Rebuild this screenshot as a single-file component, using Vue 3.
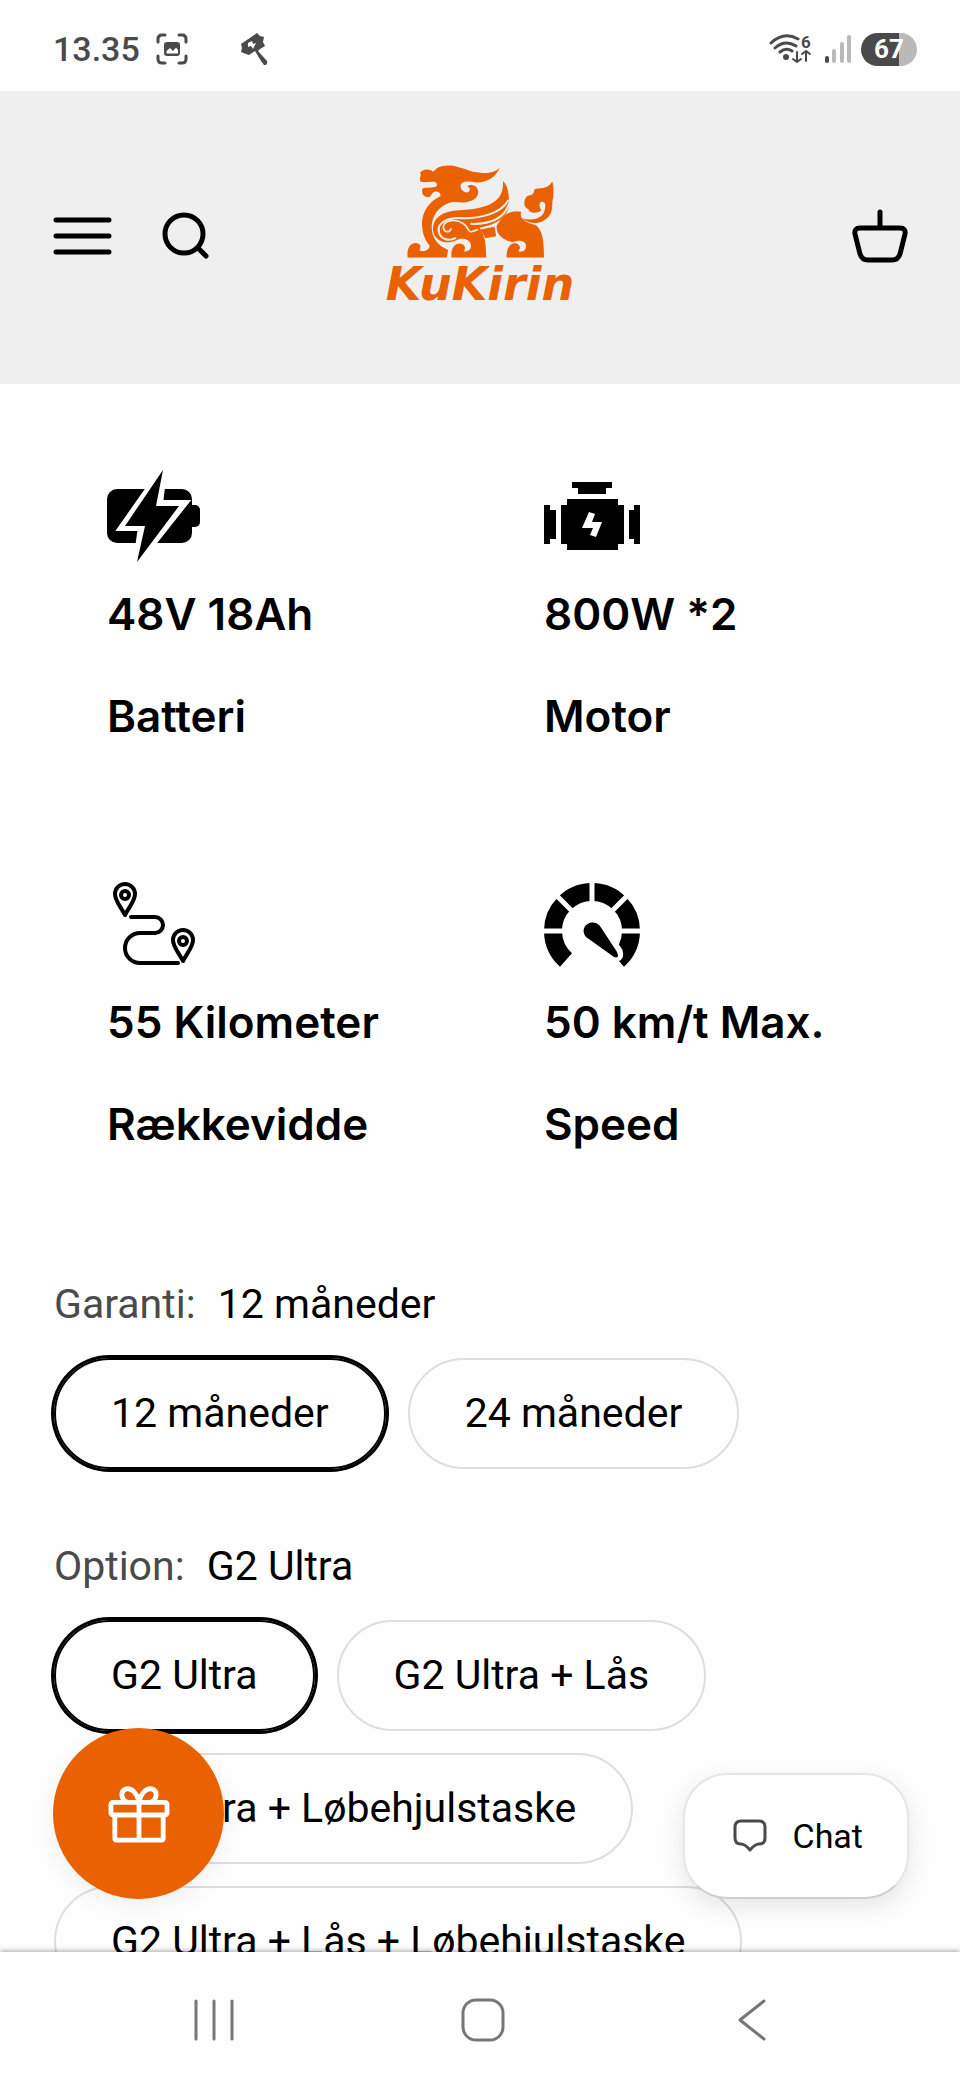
<template>
  <div class="phone">
    <!-- status bar -->
    <div class="status-bar">
      <div class="status-left">
        <span class="clock">13.35</span>
        <svg class="capture-icon" viewBox="0 0 32 32" width="32" height="32" fill="none" stroke="#4a4a4a" stroke-width="3" stroke-linecap="round">
          <path d="M2 9V6Q2 2 6 2H9M23 2H26Q30 2 30 6V9M30 23V26Q30 30 26 30H23M9 30H6Q2 30 2 26V23" />
          <rect x="8" y="9" width="16" height="14" rx="3" fill="#4a4a4a" stroke="none" />
          <path d="M10.500 20.500V18L14 15L17 18L20 14.500L22 17V20.500Z" fill="#fff" stroke="none" />
        </svg>
        <svg class="hammer-icon" viewBox="0 0 28 33" width="28" height="33" fill="#4a4a4a">
          <path d="M1 11L17 0L20 3L24 4L23 9L25 13L20 16L18 18L27 28Q28 32 24 32L21 28L15 18L9 22L6 21L1 19L2 15Z" />
          <path d="M8 10L12 8L13 11L16 10L13 16L11 13L8 14Z" fill="#fff" />
        </svg>
      </div>
      <div class="status-right">
        <svg viewBox="0 0 46 32" width="46" height="32" fill="none" stroke="#4a4a4a" stroke-width="3" stroke-linecap="round">
          <path d="M2 10Q15-2 29 6M6 15Q16 6 27 13M11 19Q17 14 23 18" />
          <circle cx="17" cy="24" r="3" fill="#4a4a4a" stroke="none" />
          <path d="M28 19V29M24 26L28 29L32 26M37 28V18M33 21L37 18L41 21" stroke-width="2" />
          <text x="32" y="15" class="wifi-gen">6</text>
        </svg>
        <svg viewBox="0 0 28 32" width="28" height="32" stroke="#b9b9b9" stroke-width="4" stroke-linecap="round">
          <path d="M3 25V28" stroke="#4a4a4a" />
          <path d="M10 18V28M18 11V28M25 4V28" />
        </svg>
        <span class="battery">67</span>
      </div>
    </div>

    <!-- shop header -->
    <header class="shop-header">
      <div class="header-side">
        <button class="icon-btn" aria-label="Menu">
          <svg viewBox="0 0 60 44" width="60" height="44" stroke="#000" stroke-width="5" stroke-linecap="round">
            <path d="M4 6H57M4 22H57M4 38H57" />
          </svg>
        </button>
        <button class="icon-btn" aria-label="Søg">
          <svg viewBox="0 0 48 48" width="48" height="48" fill="none" stroke="#000" stroke-width="5" stroke-linecap="round">
            <circle cx="22" cy="22" r="19" />
            <path d="M36 36L44 44" />
          </svg>
        </button>
      </div>

      <a href="#" class="logo">
        <svg viewBox="112 40 446 284" width="149" height="95" fill="#e96100" aria-hidden="true">
          <!-- head, mane and neck -->
          <path d="M393 50C378 68 340 71 302 60C268 47 246 41 222 46C207 49 202 56 193 63C184 53 160 53 154 67C161 72 148 86 157 93C168 96 182 92 196 93C208 96 207 107 198 109C184 112 172 110 161 113C158 127 163 138 179 139C190 138 187 123 201 122C211 122 217 128 215 136C179 152 158 187 160 222C161 252 171 270 182 283C186 296 164 306 152 298C159 286 155 277 142 276C120 277 114 298 117 320H234L238 297C201 283 184 250 190 216C196 184 216 164 245 155C262 151 275 157 292 154C315 150 329 140 328 122C326 103 306 98 295 107C307 111 305 123 293 125C278 122 272 109 277 99C287 88 306 94 324 95C360 94 381 77 393 50Z" />
          <!-- wing and shoulder -->
          <path d="M402 91C421 109 419 139 421 152C423 196 386 221 332 231C349 252 352 285 352 320H248C246 294 255 280 272 278C288 279 293 292 284 301C299 304 309 294 306 280C300 262 276 260 261 269C233 282 198 270 193 240C190 200 222 180 272 178C344 175 408 160 402 91Z" />
          <g fill="none" stroke="#efefef" stroke-width="6" stroke-linecap="round">
            <path d="M418 149C395 190 330 203 280 202C236 200 207 214 210 240" />
            <path d="M422 156C405 210 350 220 307 219" />
            <path d="M247 234C240 249 222 242 224 226C229 207 260 203 285 219C305 236 294 252 326 236" stroke-width="5" />
            <path d="M210 238C212 266 241 272 260 262" />
          </g>
          <path d="M335 236L377 228L382 256L350 262Z" />
          <!-- hindquarters -->
          <path d="M383 226C401 193 421 177 457 183C449 204 474 216 498 222C520 234 525 268 525 320H413C412 294 422 277 438 276C454 279 457 292 448 301C463 306 474 295 471 281C464 267 447 268 432 274C401 267 383 251 383 226Z" />
          <!-- tail -->
          <path d="M550 92C556 110 552 129 553 141C547 149 554 171 544 190C526 220 484 225 460 202C491 211 519 203 526 181C532 163 529 151 517 153C508 158 512 170 517 178C502 191 480 185 479 175C464 171 462 148 474 136C487 132 495 133 496 116C510 109 536 118 550 92Z" />
        </svg>
        <span class="wordmark">KuKirin</span>
      </a>

      <div class="header-side end">
        <button class="icon-btn" aria-label="Kurv">
          <svg viewBox="0 0 56 54" width="56" height="54" fill="none" stroke="#000" stroke-width="5" stroke-linecap="round" stroke-linejoin="round">
            <path d="M28 3V18" />
            <path d="M8 19H48Q54 19 53 25L48 45Q46 51 40 51H16Q10 51 8 45L3 25Q2 19 8 19Z" />
          </svg>
        </button>
      </div>
    </header>

    <main class="content">
      <section class="specs">
        <div class="spec">
          <svg viewBox="0 0 96 96" width="96" height="96">
            <rect x="0" y="21" width="85" height="54" rx="10" />
            <rect x="80" y="37" width="13" height="22" rx="5" />
            <path d="M56 2L16 59H35L30 94L76 36H52Z" stroke="#fff" stroke-width="8" />
            <path d="M56 2L18 58H38L30 94L72 38H49Z" />
          </svg>
          <p>48V 18Ah</p>
          <p>Batteri</p>
        </div>
        <div class="spec">
          <svg viewBox="0 0 96 96" width="96" height="96">
            <path d="M28 14H68V20H62V26H34V20H28Z" />
            <path d="M23 31H74V37H80V76H74V82H23V76H17V37H23Z" />
            <path d="M0 37H6V42H12V71H6V76H0ZM96 37H90V42H85V71H90V76H96Z" />
            <path d="M45 44L51 46L48 54H58L52 69L46 67L49 60H38Z" fill="#fff" />
          </svg>
          <p>800W *2</p>
          <p>Motor</p>
        </div>
        <div class="spec">
          <svg viewBox="0 0 96 96" width="96" height="96" fill="none" stroke="#000" stroke-width="4" stroke-linecap="round" stroke-linejoin="round">
            <path d="M18 39C14 31 8 25 8 18A10 10 0 0 1 28 18C28 25 22 31 18 39Z" />
            <circle cx="18" cy="19" r="4" />
            <path d="M76 85C72 77 66 71 66 64A10 10 0 0 1 86 64C86 71 80 77 76 85Z" />
            <circle cx="76" cy="65" r="4" />
            <path d="M24 41H48A8 8 0 0 1 48 57H33A15 15 0 0 0 33 87H71" />
          </svg>
          <p>55 Kilometer</p>
          <p>Rækkevidde</p>
        </div>
        <div class="spec">
          <svg viewBox="0 0 96 96" width="96" height="96">
            <path d="M22 84A39 39 0 1 1 74 84" fill="none" stroke="#000" stroke-width="18" />
            <g stroke="#fff" stroke-width="5">
              <path d="M48 4V28M0 55H22M74 55H96M12 19L31 38M84 19L65 38" />
            </g>
            <path d="M42 61C34 48 50 40 57 51L74 75Q77 84 68 79Z" stroke="#fff" stroke-width="9" stroke-linejoin="round" />
            <path d="M42 61C34 51 48 41 56 50L73 76Q76 83 70 81Z" />
          </svg>
          <p>50 km/t Max.</p>
          <p>Speed</p>
        </div>
      </section>

      <form class="variants">
        <fieldset v-for="group in groups" :key="group.name">
          <legend>{{ group.name }}: <span>{{ group.selected }}</span></legend>
          <div class="chips">
            <label
              v-for="value in group.values"
              :key="value"
              class="chip"
              :class="{ active: value === group.selected }"
            >
              <input type="radio" :name="group.name" :value="value" v-model="group.selected" />
              {{ value }}
            </label>
          </div>
        </fieldset>
      </form>

      <!-- floating buttons -->
      <button class="gift-btn" aria-label="Gave">
        <svg viewBox="0 0 64 60" width="62" height="58" fill="none" stroke="#fff" stroke-width="5" stroke-linejoin="round">
          <rect x="3" y="18" width="58" height="13" rx="2" />
          <path d="M7 31V55Q7 57 9 57H55Q57 57 57 55V31M32 18V57" />
          <path d="M32 18C30 8 24 3 19 4C12 6 13 15 20 18M32 18C34 8 40 3 45 4C52 6 51 15 44 18" />
        </svg>
      </button>
      <button class="chat-btn">
        <svg viewBox="0 0 34 34" width="34" height="34" fill="none" stroke="#4a4a4a" stroke-width="3" stroke-linejoin="round">
          <path d="M8 2H26Q32 2 32 8V19Q32 25 26 25Q22 25 17 31Q12 25 8 25Q2 25 2 19V8Q2 2 8 2Z" />
        </svg>
        Chat
      </button>
    </main>

    <!-- android navigation -->
    <nav class="system-nav">
      <button class="icon-btn" aria-label="Seneste">
        <svg viewBox="0 0 44 44" width="44" height="44" stroke="#777" stroke-width="3" stroke-linecap="round">
          <path d="M4 3V41M22 3V41M40 3V41" />
        </svg>
      </button>
      <button class="icon-btn" aria-label="Hjem">
        <svg viewBox="0 0 44 44" width="44" height="44" fill="none" stroke="#777" stroke-width="3">
          <rect x="2" y="2" width="40" height="40" rx="13" />
        </svg>
      </button>
      <button class="icon-btn" aria-label="Tilbage">
        <svg viewBox="0 0 44 44" width="44" height="44" fill="none" stroke="#777" stroke-width="3" stroke-linecap="round" stroke-linejoin="round">
          <path d="M34 3L10 22L34 41" />
        </svg>
      </button>
    </nav>
  </div>
</template>

<script setup>
import { reactive } from 'vue';

const groups = reactive([
  {
    name: 'Garanti',
    selected: '12 måneder',
    values: ['12 måneder', '24 måneder'],
  },
  {
    name: 'Option',
    selected: 'G2 Ultra',
    values: [
      'G2 Ultra',
      'G2 Ultra + Lås',
      'G2 Ultra + Løbehjulstaske',
      'G2 Ultra + Lås + Løbehjulstaske',
    ],
  },
]);
</script>

<style>
body {
  margin: 0;
  background: #fff;
}
</style>

<style scoped>
* {
  box-sizing: border-box;
}
.phone {
  display: flex;
  flex-direction: column;
  height: 100vh;
  overflow: hidden;
  background: #fefefe;
  color: #000;
  font-family: Roboto, "Liberation Sans", sans-serif;
}
svg {
  display: block;
  flex: none;
}
button {
  font: inherit;
  color: inherit;
  border: 0;
  cursor: pointer;
}
.icon-btn {
  padding: 0;
  background: none;
}

/* status bar */
.status-bar {
  display: flex;
  flex: none;
  justify-content: space-between;
  align-items: center;
  height: 91px;
  padding: 7px 43px 0 53px;
  color: #4a4a4a;
}
.status-left,
.status-right {
  display: flex;
  align-items: center;
}
.clock {
  font-size: 34px;
  font-weight: 500;
}
.capture-icon {
  margin-left: 16px;
}
.hammer-icon {
  margin-left: 52px;
}
.status-right {
  gap: 9px;
}
.wifi-gen {
  font-size: 17px;
  font-weight: 700;
  fill: #4a4a4a;
  stroke: none;
}
.battery {
  width: 56px;
  height: 33px;
  border-radius: 17px;
  background: linear-gradient(90deg, #4a4a4a 67%, #b9b9b9 67%);
  color: #fff;
  font-size: 26px;
  font-weight: 700;
  line-height: 33px;
  text-align: center;
}

/* header */
.shop-header {
  display: grid;
  flex: none;
  grid-template-columns: 1fr auto 1fr;
  align-items: center;
  height: 293px;
  padding: 0 52px 3px;
  background: #efefef;
}
.header-side {
  display: flex;
  align-items: center;
  gap: 50px;
}
.end {
  justify-content: flex-end;
}
.logo {
  display: flex;
  flex-direction: column;
  align-items: center;
  color: #e96100;
  text-decoration: none;
}
.wordmark {
  font-family: "DejaVu Sans", sans-serif;
  font-size: 46px;
  font-style: italic;
  font-weight: 700;
  line-height: 50px;
}

/* product content */
.content {
  position: relative;
  flex: 1;
  min-height: 0;
  padding: 84px 54px 0;
  overflow: hidden;
}
.specs {
  display: grid;
  grid-template-columns: 1fr 1fr;
  gap: 129px 22px;
}
.spec {
  padding-left: 53px;
}
.spec p {
  margin: 40px 0 0;
  font-family: Inter, "Liberation Sans", sans-serif;
  font-size: 44px;
  font-weight: 600;
  line-height: 62px;
  white-space: nowrap;
}
.spec svg + p {
  margin-top: 19px;
}
.variants {
  margin-top: 121px;
}
fieldset {
  min-width: 0;
  margin: 0 0 69px;
  padding: 0;
  border: 0;
}
legend {
  padding: 0;
  margin-bottom: 26px;
  color: #4a4a4a;
  font-size: 41px;
  line-height: 56px;
}
legend span {
  margin-left: 12px;
  color: #000;
}
.chips {
  display: flex;
  flex-wrap: wrap;
  gap: 22px;
}
.chip {
  position: relative;
  padding: 0 55px;
  border: 2px solid #dedede;
  border-radius: 56px;
  font-size: 41px;
  line-height: 107px;
  white-space: nowrap;
  cursor: pointer;
}
.chip.active {
  border-color: #000;
  box-shadow: 0 0 0 3px #000;
}
.chip input {
  position: absolute;
  opacity: 0;
}

/* floating buttons */
.gift-btn {
  position: absolute;
  left: 53px;
  bottom: 53px;
  display: flex;
  align-items: center;
  justify-content: center;
  width: 171px;
  height: 171px;
  border-radius: 50%;
  background: #e96100;
  box-shadow: 0 8px 24px rgba(0, 0, 0, 0.06);
}
.chat-btn {
  position: absolute;
  right: 51px;
  bottom: 53px;
  display: flex;
  align-items: center;
  gap: 26px;
  height: 126px;
  padding: 0 44px 0 48px;
  border: 2px solid #e6e6e6;
  border-bottom-color: #d0d0d0;
  border-radius: 44px;
  background: #fff;
  box-shadow: 0 8px 24px rgba(0, 0, 0, 0.1);
  font-size: 34px;
}

/* system navigation */
.system-nav {
  position: relative;
  display: flex;
  flex: none;
  align-items: center;
  justify-content: center;
  gap: 225px;
  height: 128px;
  padding: 8px 0 0 6px;
  background: #fefefe;
  box-shadow: 0 -1px 5px rgba(0, 0, 0, 0.35);
}
</style>
